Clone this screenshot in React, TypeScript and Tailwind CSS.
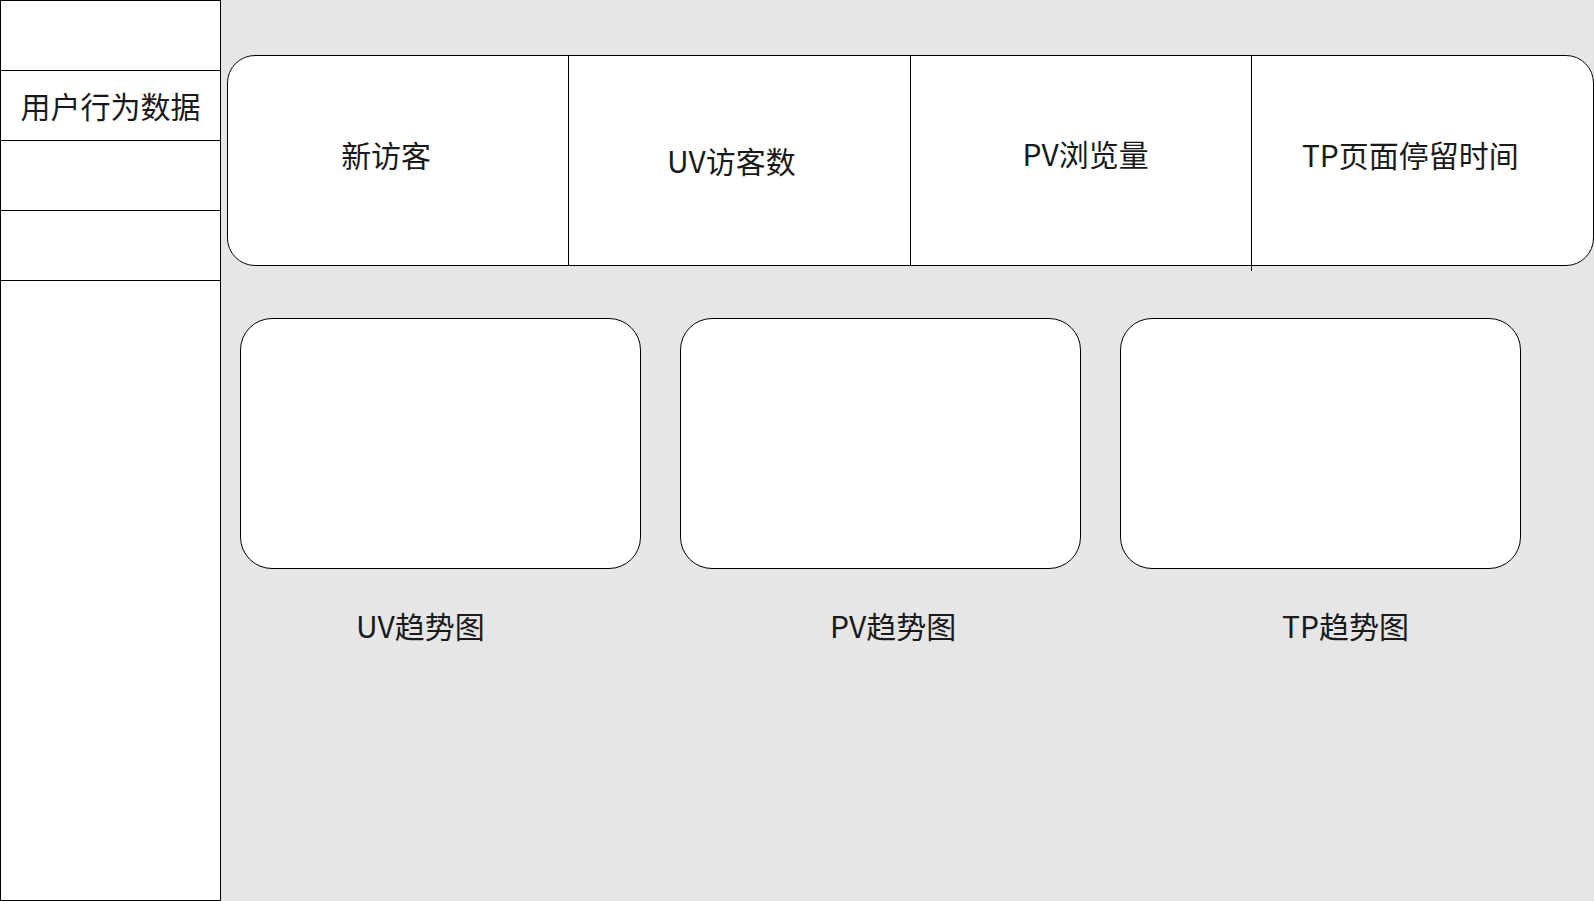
const font = { fontFamily: '"Noto Sans CJK SC", "Noto Sans", sans-serif' };

const stats = [
  { label: "新访客", cls: "pr-[24px] pb-[14px]" },
  { label: "UV访客数", cls: "pr-[16px] pb-[2px]" },
  { label: "PV浏览量", cls: "pl-[10px] pb-[16px]" },
  { label: "TP页面停留时间", cls: "pr-[24px] pb-[14px]" },
];

const charts = [
  { label: "UV趋势图", offset: "ml-[116px]" },
  { label: "PV趋势图", offset: "ml-[150px]" },
  { label: "TP趋势图", offset: "ml-[162px]" },
];

function Sidebar() {
  return (
    <div className="w-[221px] h-[901px] shrink-0 flex flex-col border border-black bg-white">
      <div className="h-[70px] border-b border-black" />
      <div className="h-[70px] border-b border-black flex items-center justify-center pb-[2px]">
        <span className="text-[30px] leading-none text-[#1a1a1a]">用户行为数据</span>
      </div>
      <div className="h-[70px] border-b border-black" />
      <div className="h-[70px] border-b border-black" />
    </div>
  );
}

export default function App() {
  return (
    <div className="flex w-[1594px] h-[901px] bg-[#e6e6e6] overflow-hidden" style={font}>
      <Sidebar />
      <main className="flex-1 pt-[55px]">
        {/* summary strip */}
        <div className="ml-[6px] w-[1367px] h-[211px] grid grid-cols-4 border border-black rounded-[28px] bg-white">
          {stats.map((s, i) => (
            <div
              key={s.label}
              className={`relative flex items-center justify-center ${i < 3 ? "border-r border-black" : ""} ${s.cls}`}
            >
              <span className="text-[30px] leading-none text-[#1a1a1a]">{s.label}</span>
              {i === 2 && <span className="absolute right-[-1px] bottom-[-6px] w-px h-[6px] bg-black" />}
            </div>
          ))}
        </div>

        {/* trend charts */}
        <div className="mt-[52px] ml-[19px] flex gap-[39px]">
          {charts.map((c) => (
            <div key={c.label} className="flex flex-col">
              <div className="w-[401px] h-[251px] border border-black rounded-[32px] bg-white" />
              <span className={`mt-[41px] ${c.offset} text-[30px] leading-none text-[#1a1a1a]`}>{c.label}</span>
            </div>
          ))}
        </div>
      </main>
    </div>
  );
}
